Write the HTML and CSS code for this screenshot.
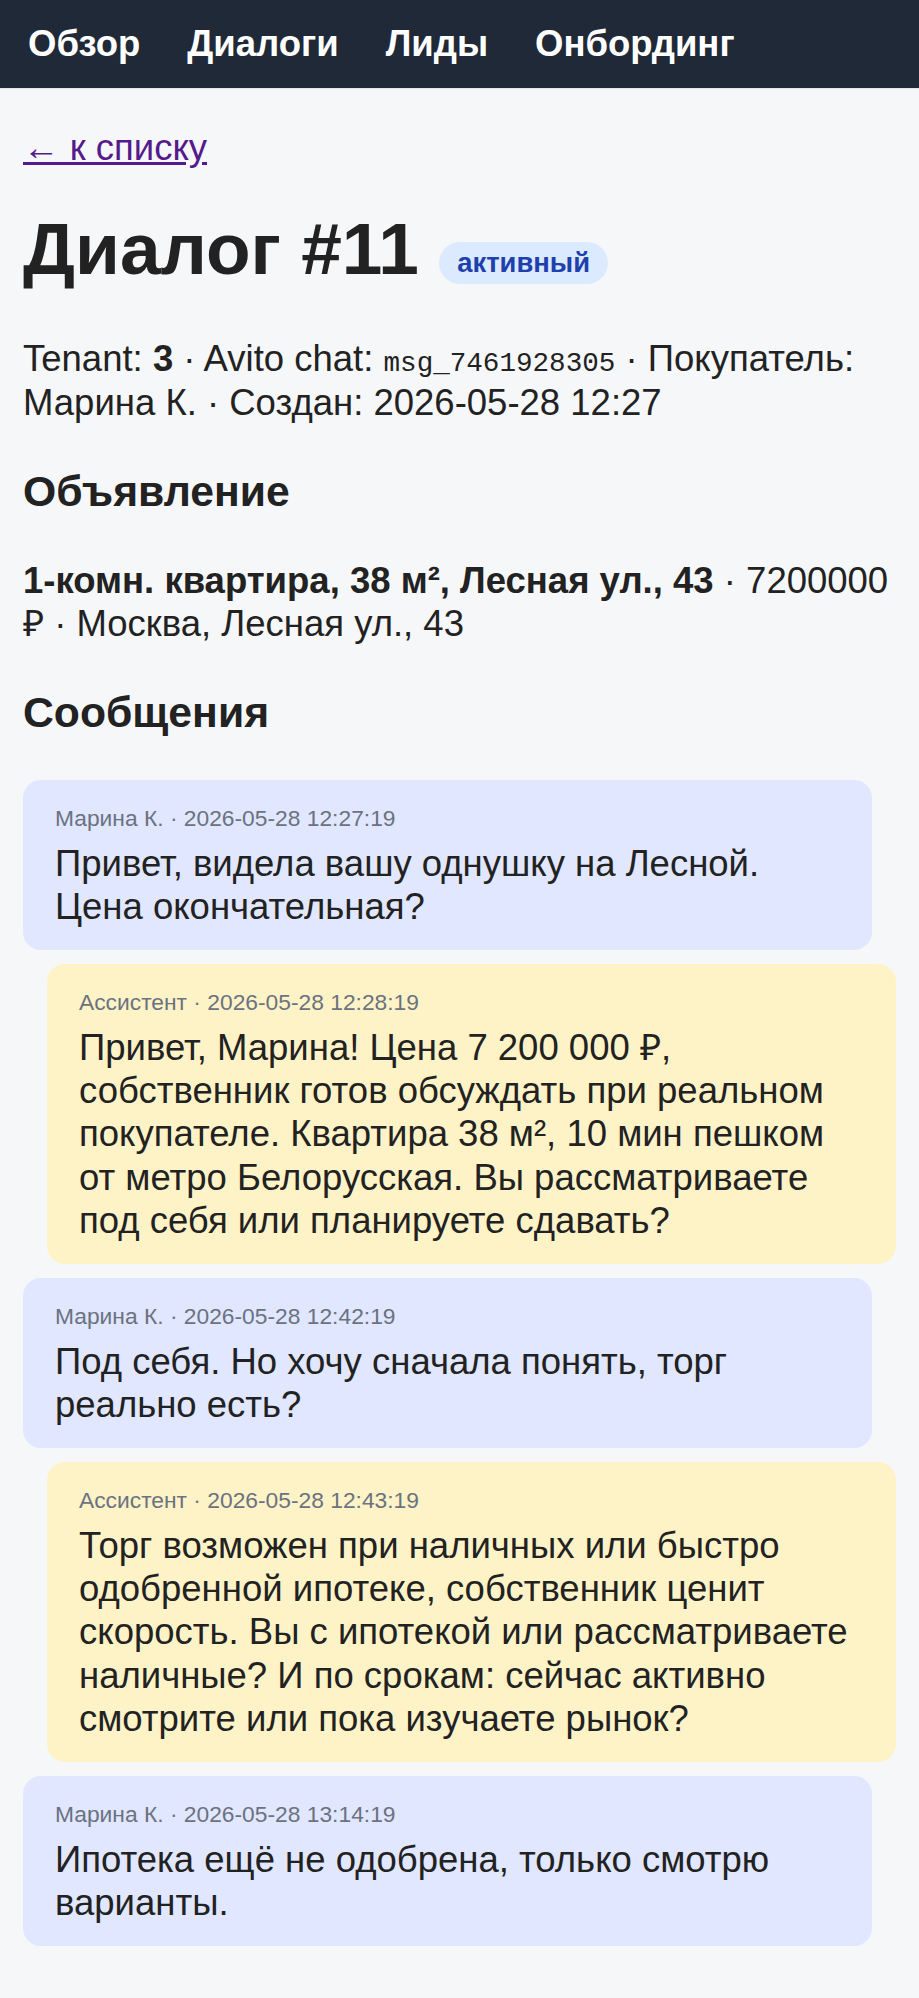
FILE: index.html
```html
<!DOCTYPE html>
<html lang="ru">
<head>
  <meta charset="UTF-8" />
  <meta name="viewport" content="width=device-width, initial-scale=1.0"/>
  <title>Диалог #11</title>
  <link rel="stylesheet" href="styles.css">
</head>
<body>
  <!-- Top navigation -->
  <nav class="topbar">
    <a href="#">Обзор</a>
    <a href="#">Диалоги</a>
    <a href="#">Лиды</a>
    <a href="#">Онбординг</a>
  </nav>

  <main class="page">
    <div class="back-row"><a class="back" href="#">← к списку</a></div>

    <h1 class="title">Диалог #11 <span class="badge">активный</span></h1>

    <p class="info">
      Tenant: <b>3</b> · Avito chat: <code>msg_7461928305</code> · Покупатель: Марина К. · Создан: 2026-05-28 12:27
    </p>

    <h3>Объявление</h3>
    <p class="listing">
      <b>1-комн. квартира, 38 м², Лесная ул., 43</b> · 7200000 ₽ · Москва, Лесная ул., 43
    </p>

    <h3>Сообщения</h3>
    <div class="messages">
      <div class="msg msg-user">
        <div class="msg-meta">Марина К. · 2026-05-28 12:27:19</div>
        <div class="msg-text">Привет, видела вашу однушку на Лесной. Цена окончательная?</div>
      </div>
      <div class="msg msg-bot">
        <div class="msg-meta">Ассистент · 2026-05-28 12:28:19</div>
        <div class="msg-text">Привет, Марина! Цена 7 200 000 ₽, собственник готов обсуждать при реальном покупателе. Квартира 38 м², 10 мин пешком от метро Белорусская. Вы рассматриваете под себя или планируете сдавать?</div>
      </div>
      <div class="msg msg-user">
        <div class="msg-meta">Марина К. · 2026-05-28 12:42:19</div>
        <div class="msg-text">Под себя. Но хочу сначала понять, торг реально есть?</div>
      </div>
      <div class="msg msg-bot">
        <div class="msg-meta">Ассистент · 2026-05-28 12:43:19</div>
        <div class="msg-text">Торг возможен при наличных или быстро одобренной ипотеке, собственник ценит скорость. Вы с ипотекой или рассматриваете наличные? И по срокам: сейчас активно смотрите или пока изучаете рынок?</div>
      </div>
      <div class="msg msg-user">
        <div class="msg-meta">Марина К. · 2026-05-28 13:14:19</div>
        <div class="msg-text">Ипотека ещё не одобрена, только смотрю варианты.</div>
      </div>
    </div>
  </main>
</body>
</html>
```

FILE: styles.css
```css
:root {
  --nav-bg: #1f2937;
  --text-color: #222;
  --muted: #6b7280;
  --page-bg: #f6f7f9;
  --user-bg: #e0e7ff;
  --bot-bg: #fef3c7;
}

body {
  margin: 0;
  font-family: 'Liberation Sans', Arial, sans-serif;
  font-size: 36.5px;
  line-height: 1.18;
  color: var(--text-color);
  background: var(--page-bg);
}

/* Top navigation */
.topbar {
  display: flex;
  gap: 47px;
  padding: 23px 28px;
  background: var(--nav-bg);
  border-bottom: 1px solid #e2e5ea;
}

.topbar a {
  color: #fff;
  font-weight: 700;
  text-decoration: none;
  line-height: normal;
}

/* Page content */
.page {
  padding: 37px 23px 48px;
}

.back {
  color: #551a8b;
}

.title {
  margin: 38px 0 47px;
  font-size: 73px;
  line-height: normal;
}

.badge {
  display: inline-block;
  vertical-align: 2px;
  padding: 5px 18px;
  border-radius: 999px;
  background: #dbeafe;
  color: #1e40af;
  font-size: 27.4px;
  line-height: normal;
}

.info, .listing {
  margin: 0;
}

.info code {
  font-family: 'Liberation Mono', monospace;
  font-size: 27.6px;
}

h3 {
  margin: 43px 0 43px;
  font-size: 42.7px;
  line-height: normal;
}

/* Messages */
.messages {
  display: flex;
  flex-direction: column;
  gap: 14px;
  margin-top: 40px;
}

.msg {
  padding: 25px 32px 21px;
  border-radius: 18px;
}

.msg-user {
  background: var(--user-bg);
  margin-right: 24px;
}

.msg-bot {
  background: var(--bot-bg);
  margin-left: 24px;
}

.msg-meta {
  margin-bottom: 10px;
  font-size: 22.8px;
  line-height: normal;
  color: var(--muted);
}

.msg-text {
  line-height: 1.19;
}
```
